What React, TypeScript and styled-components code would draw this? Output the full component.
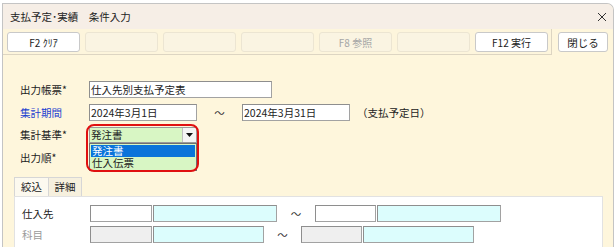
import React from "react";
import styled, { createGlobalStyle } from "styled-components";

const GlobalStyle = createGlobalStyle`
  html, body { margin: 0; padding: 0; background: #ffffff; overflow: hidden; }
  body { font-family: "Noto Sans CJK JP", "Noto Sans", sans-serif; color: #222; }
  * { box-sizing: border-box; }
`;

const Page = styled.div`
  padding: 3px 0 0 2px;
  width: 616px;
  height: 247px;
`;

const Window = styled.div`
  width: 612px;
  height: 260px;
  border: 1px solid #c4c4c4;
  border-bottom: none;
  border-top-right-radius: 7px;
  background: #fef6dc;
  display: flex;
  flex-direction: column;
  overflow: hidden;
`;

const TitleBar = styled.div`
  height: 25px;
  background: #f6eee6;
  display: flex;
  align-items: center;
  justify-content: space-between;
  padding: 0 6px 0 7px;
  font-size: 10.5px;
  color: #222;
`;

const CloseX = styled.svg`
  width: 10px;
  height: 10px;
`;

const ToolRow = styled.div`
  display: flex;
  align-items: flex-start;
`;

const Toolbar = styled.div`
  display: flex;
  gap: 5px;
  padding: 3px 3px 2px 4px;
  border-right: 1px solid #ddd5c2;
  border-bottom: 1px solid #ddd5c2;
  background: #fdf5dc;
`;

const FButton = styled.div<{ $enabled?: boolean }>`
  width: 73px;
  height: 20px;
  border-radius: 3px;
  border: 1px solid ${(p) => (p.$enabled ? "#c9c9c9" : "#ece5d2")};
  background: ${(p) => (p.$enabled ? "#ffffff" : "#faf4e2")};
  color: ${(p) => (p.$enabled ? "#222" : "#a6a6a6")};
  font-size: 10px;
  display: flex;
  align-items: center;
  justify-content: center;
  white-space: nowrap;
`;

const CloseButton = styled(FButton)`
  width: 50px;
  margin-left: 6px;
  margin-top: 3px;
  font-size: 10.5px;
`;

const Body = styled.div`
  flex: 1;
  display: flex;
  flex-direction: column;
  padding: 26px 10px 0 11px;
`;

const FormGrid = styled.div`
  display: grid;
  grid-template-columns: 69px auto;
  grid-auto-rows: 17px;
  row-gap: 5.5px;
  padding-left: 6px;
  align-items: center;
`;

const Label = styled.div<{ $link?: boolean; $muted?: boolean }>`
  font-size: 10.5px;
  color: ${(p) => (p.$link ? "#1c3fd0" : p.$muted ? "#9a9a9a" : "#222")};
  white-space: nowrap;
`;

const FieldRow = styled.div`
  display: flex;
  align-items: center;
  height: 17px;
`;

const TextBox = styled.div<{ $w: number; $bg?: string }>`
  width: ${(p) => p.$w}px;
  height: 17px;
  border: 1px solid #a2a2a2;
  border-top-color: #8e8e8e;
  border-left-color: #8e8e8e;
  background: ${(p) => p.$bg || "#ffffff"};
  font-size: 10.5px;
  line-height: 15px;
  padding-left: 1px;
  white-space: nowrap;
  overflow: hidden;
`;

const Tilde = styled.span<{ $w: number }>`
  width: ${(p) => p.$w}px;
  text-align: center;
  font-size: 10.5px;
  color: #333;
`;

const Note = styled.span`
  font-size: 10.5px;
  margin-left: 7px;
  color: #222;
`;

const ComboWrap = styled.div`
  position: relative;
  width: 108px;
  height: 16px;
`;

const Combo = styled.div`
  width: 108px;
  height: 16px;
  border: 1px solid #9a9a9a;
  background: #d8f6c4;
  display: flex;
  align-items: center;
  justify-content: space-between;
  font-size: 10.5px;
  padding-left: 1px;
`;

const ArrowBtn = styled.div`
  width: 14px;
  height: 14px;
  background: #f4f4f4;
  border-left: 1px solid #c0c0c0;
  display: flex;
  align-items: center;
  justify-content: center;
`;

const DropList = styled.div`
  position: absolute;
  left: 0;
  top: 16px;
  width: 108px;
  border: 1px solid #707070;
  background: #d8f6c4;
  padding: 1px;
  z-index: 2;
`;

const DropItem = styled.div<{ $active?: boolean }>`
  height: 12px;
  line-height: 12px;
  font-size: 10.5px;
  background: ${(p) => (p.$active ? "#0a74da" : "transparent")};
  color: ${(p) => (p.$active ? "#ffffff" : "#222")};
  padding-left: 1px;
`;

const Highlight = styled.div`
  position: absolute;
  left: -3px;
  top: -3px;
  width: 113px;
  height: 48px;
  border: 2px solid #e01010;
  border-radius: 8px;
  z-index: 3;
  pointer-events: none;
`;

const Tabs = styled.div`
  display: flex;
  margin-top: 11px;
  height: 19px;
`;

const Tab = styled.div<{ $active?: boolean }>`
  width: ${(p) => (p.$active ? 35 : 33)}px;
  height: 19px;
  border: 1px solid #d6d6d6;
  border-bottom: none;
  border-left: ${(p) => (p.$active ? "1px solid #d6d6d6" : "none")};
  background: ${(p) => (p.$active ? "#fcf9ef" : "#f6f0de")};
  font-size: 10.5px;
  display: flex;
  align-items: center;
  justify-content: center;
`;

const Panel = styled.div`
  flex: 1;
  background: #ffffff;
  border: 1px solid #e2e2e2;
  padding: 9px 0 0 7px;
  display: grid;
  grid-template-columns: 68px auto;
  grid-auto-rows: 16px;
  row-gap: 5px;
  align-items: center;
  align-content: start;
`;

const Gap = styled.span`
  width: 1px;
`;

export default function App() {
  return (
    <>
      <GlobalStyle />
      <Page>
        <Window>
          <TitleBar>
            <span>支払予定･実績　条件入力</span>
            <CloseX viewBox="0 0 10 10">
              <path d="M1 1 L9 9 M9 1 L1 9" stroke="#333" strokeWidth="1" fill="none" />
            </CloseX>
          </TitleBar>
          <ToolRow>
            <Toolbar>
              <FButton $enabled>F2 ｸﾘｱ</FButton>
              <FButton />
              <FButton />
              <FButton />
              <FButton>F8 参照</FButton>
              <FButton />
              <FButton $enabled>F12 実行</FButton>
            </Toolbar>
            <CloseButton $enabled>閉じる</CloseButton>
          </ToolRow>
          <Body>
            <FormGrid>
              <Label>出力帳票*</Label>
              <FieldRow>
                <TextBox $w={183}>仕入先別支払予定表</TextBox>
              </FieldRow>
              <Label $link>集計期間</Label>
              <FieldRow>
                <TextBox $w={108}>2024年3月1日</TextBox>
                <Tilde $w={45}>～</Tilde>
                <TextBox $w={108}>2024年3月31日</TextBox>
                <Note>（支払予定日）</Note>
              </FieldRow>
              <Label>集計基準*</Label>
              <FieldRow>
                <ComboWrap>
                  <Combo>
                    <span>発注書</span>
                    <ArrowBtn>
                      <svg width="7" height="4" viewBox="0 0 7 4">
                        <path d="M0 0 L7 0 L3.5 4 Z" fill="#111" />
                      </svg>
                    </ArrowBtn>
                  </Combo>
                  <DropList>
                    <DropItem $active>発注書</DropItem>
                    <DropItem>仕入伝票</DropItem>
                  </DropList>
                  <Highlight />
                </ComboWrap>
              </FieldRow>
              <Label>出力順*</Label>
              <FieldRow />
            </FormGrid>
            <Tabs>
              <Tab $active>絞込</Tab>
              <Tab>詳細</Tab>
            </Tabs>
            <Panel>
              <Label>仕入先</Label>
              <FieldRow>
                <TextBox $w={62} />
                <Gap />
                <TextBox $w={124} $bg="#dcfdfd" />
                <Tilde $w={38}>～</Tilde>
                <TextBox $w={61} />
                <Gap />
                <TextBox $w={124} $bg="#dcfdfd" />
              </FieldRow>
              <Label $muted>科目</Label>
              <FieldRow>
                <TextBox $w={62} $bg="#efefef" />
                <Gap />
                <TextBox $w={111} $bg="#dcfdfd" />
                <Tilde $w={37}>～</Tilde>
                <TextBox $w={61} $bg="#efefef" />
                <Gap />
                <TextBox $w={111} $bg="#dcfdfd" />
              </FieldRow>
            </Panel>
          </Body>
        </Window>
      </Page>
    </>
  );
}
